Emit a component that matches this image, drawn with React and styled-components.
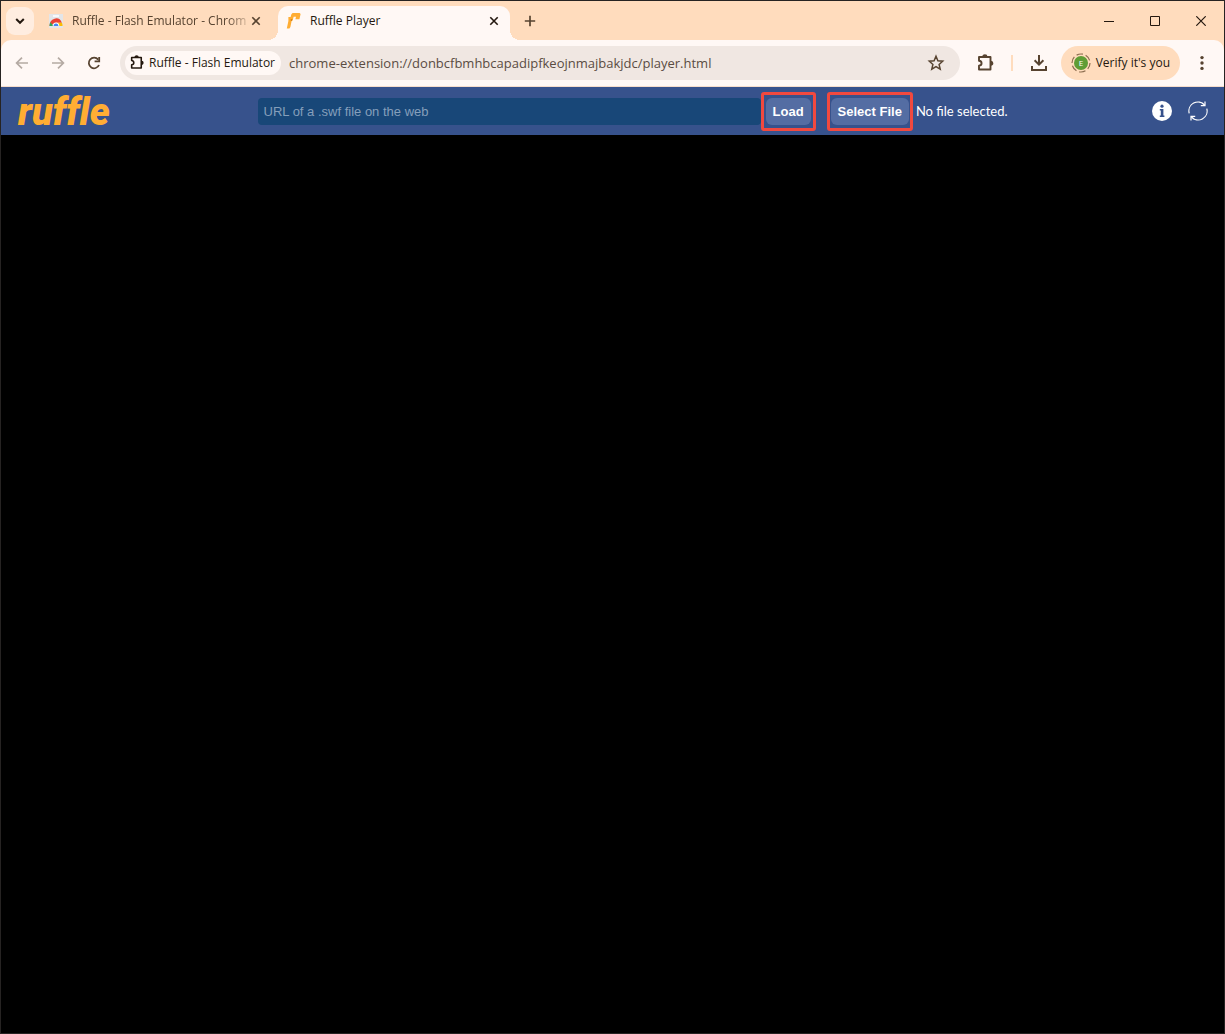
import React from "react";
import styled, { createGlobalStyle } from "styled-components";

const c = {
  frame: "#262322",
  strip: "#ffdcbd",
  bar: "#fff8f5",
  field: "#f0e7e2",
  ink: "#24180f",
  brown: "#574330",
  header: "#37528c",
  input: "#184778",
  button: "#546da3",
  orange: "#ffad33",
  red: "#f1493f",
};

const GlobalStyle = createGlobalStyle`
  * { box-sizing: border-box; }
  body { margin: 0; }
  button, input { font: inherit; }
`;

const Window = styled.div`
  display: flex;
  flex-direction: column;
  min-height: 100vh;
  border: 1px solid ${c.frame};
  background: ${c.strip};
  font-family: "Open Sans", "Noto Sans", sans-serif;
  font-size: 12px;
  color: ${c.ink};
`;

const TabStrip = styled.header`
  display: flex;
  align-items: center;
  height: 39px;
  padding-left: 5px;
`;

const PlainButton = styled.button`
  display: inline-flex;
  align-items: center;
  justify-content: center;
  flex: none;
  width: ${(p) => p.$w || 20}px;
  height: ${(p) => p.$h || 20}px;
  padding: 0;
  border: 0;
  border-radius: ${(p) => p.$radius || 0}px;
  background: ${(p) => p.$bg || "transparent"};
  color: ${(p) => p.$color || c.ink};
`;

const Tab = styled.div`
  position: relative;
  display: flex;
  align-items: center;
  align-self: stretch;
  width: 232px;
  margin-top: 5px;
  padding: 0 8px 5px 8px;
  border-radius: 10px 10px 0 0;
  background: ${(p) => (p.$active ? c.bar : "transparent")};
  color: ${(p) => (p.$active ? c.ink : c.brown)};

  &::before,
  &::after {
    content: "";
    display: ${(p) => (p.$active ? "block" : "none")};
    position: absolute;
    bottom: 0;
    width: 10px;
    height: 10px;
  }
  &::before {
    right: 100%;
    background: radial-gradient(circle at 0 0, transparent 10px, ${c.bar} 10px);
  }
  &::after {
    left: 100%;
    background: radial-gradient(circle at 100% 0, transparent 10px, ${c.bar} 10px);
  }
`;

const Tabs = styled.nav`
  display: flex;
  align-self: stretch;
  gap: 6px;
  margin: 0 10px 0 6px;
`;

const TabTitle = styled.span`
  flex: 1;
  margin-left: 8px;
  white-space: nowrap;
  line-height: 18px;
  mask-image: ${(p) => (p.$fade ? "linear-gradient(to right, #000 88%, rgba(0, 0, 0, 0.2))" : "none")};
`;

const WindowControls = styled.div`
  display: flex;
  margin-left: auto;
`;

const Toolbar = styled.div`
  display: flex;
  align-items: center;
  height: 47px;
  padding: 0 12px 1px 11px;
  border-bottom: 1px solid #f5dccb;
  border-radius: 10px 10px 0 0;
  background: ${c.bar};
`;

const NavButtons = styled.div`
  display: flex;
  gap: 16px;
  margin-right: 16px;
`;

const Omnibox = styled.div`
  display: flex;
  align-items: center;
  flex: 1;
  min-width: 0;
  height: 34px;
  padding: 0 14px 0 5px;
  border-radius: 17px;
  background: ${c.field};
`;

const Chip = styled.button`
  display: flex;
  align-items: center;
  flex: none;
  gap: 4px;
  height: 24px;
  padding: 0 6px 0 5px;
  border: 0;
  border-radius: 12px;
  background: ${c.bar};
  color: ${c.ink};
  font-weight: 500;
  white-space: nowrap;
`;

const Address = styled.input`
  flex: 1;
  min-width: 0;
  height: 24px;
  padding: 0 8px;
  border: 0;
  background: transparent;
  color: #5a4c42;
  font-size: 13px;
  outline: 0;
`;

const Actions = styled.div`
  display: flex;
  align-items: center;
  margin-left: 16px;
`;

const Divider = styled.span`
  width: 2px;
  height: 16px;
  margin: 0 16px 0 15px;
  background: ${c.strip};
`;

const Profile = styled.button`
  display: flex;
  align-items: center;
  gap: 5px;
  height: 34px;
  margin: 0 12px;
  padding: 0 10px;
  border: 0;
  border-radius: 17px;
  background: ${c.strip};
  color: ${c.ink};
  white-space: nowrap;
`;

const PlayerHeader = styled.header`
  display: flex;
  align-items: center;
  justify-content: space-between;
  height: 48px;
  padding: 0 16px;
  background: ${c.header};
  color: #fff;
`;

const Logo = styled.a`
  display: block;
  height: 36px;
  text-decoration: none;
`;

const Wordmark = styled.svg`
  display: block;
  overflow: visible;
  text {
    fill: ${c.orange};
    font: italic 900 38px Roboto, sans-serif;
    font-variant-ligatures: none;
  }
`;

const LoadForm = styled.form`
  display: flex;
  align-items: center;
  flex: 0 1 750px;
  min-width: 0;
  font-family: "Liberation Sans", Arial, sans-serif;
`;

const UrlInput = styled.input`
  flex: 1;
  min-width: 0;
  height: 27px;
  padding: 0 6px;
  border: 0;
  border-radius: 4px;
  background: ${c.input};
  color: #fff;
  font-size: 13px;
  &::placeholder {
    color: #859fbb;
    opacity: 1;
  }
`;

const Callout = styled.span`
  display: flex;
  flex: none;
  padding: 3px ${(p) => p.$inset}px;
  border: 3px solid ${c.red};
  border-radius: 3px;
`;

const ActionButton = styled.button`
  height: 27px;
  padding: 0 7px;
  border: 0;
  border-radius: 6px;
  background: ${c.button};
  color: #fff;
  font-size: 13px;
  font-weight: bold;
  white-space: nowrap;
`;

const FilePicker = styled.div`
  display: flex;
  align-items: center;
  flex: none;
  gap: 3px;
  margin-left: 11px;
`;

const FileName = styled.output`
  font-family: Lato, sans-serif;
  font-size: 13px;
  white-space: nowrap;
`;

const HeaderIcons = styled.div`
  display: flex;
  gap: 16px;
`;

const Stage = styled.main`
  flex: 1;
  background: #000;
`;

const Icon = ({ size = 20, w = 2, children }) => (
  <svg width={size} height={size} viewBox={`0 0 ${size} ${size}`} fill="none" stroke="currentColor" strokeWidth={w} aria-hidden="true">
    {children}
  </svg>
);

const CloseIcon = () => (
  <Icon size={10} w={1.6}><path d="M1.3 1.3l7.4 7.4M8.7 1.3L1.3 8.7" /></Icon>
);

const PuzzleIcon = ({ size }) => (
  <svg width={size} height={size} viewBox="0 0 18 18" fill="none" stroke="currentColor" strokeWidth="1.9" strokeLinejoin="round" aria-hidden="true">
    <path d="M2 3h11.5v12.5H2v-3.7c3.4-.4 3.4-4.7 0-5.1z" />
    <path d="M6 3a1.9 1.9 0 0 1 3.8 0zM13.5 7.3a2 2 0 0 1 0 4z" fill="currentColor" stroke="none" />
    <path d="M6.3 2.5a1.6 1.4 0 0 1 3.2 0M14 7.7a1.4 1.6 0 0 1 0 3.2" />
  </svg>
);

const StoreIcon = () => (
  <svg width="16" height="16" viewBox="0 0 16 16" aria-hidden="true">
    <path fill="#e3e5e8" d="M1 1h14v14H1z" />
    <path fill="#f8f9fa" d="M5 2h6v2H5z" />
    <path fill="#ea4335" d="M1.5 13a6.5 7.5 0 0 1 12.4-3.2H8z" />
    <path fill="#34a853" d="M1.5 13a7 7 0 0 1 1-3.8L5.6 13z" />
    <path fill="#fbbc04" d="M10 9.8h4a7 7 0 0 1 .6 3.2h-4z" />
    <path fill="#fff" d="M4.7 13a3.3 3.5 0 0 1 6.6 0z" />
    <path fill="#4285f4" d="M5.6 13a2.4 2.6 0 0 1 4.8 0z" />
  </svg>
);

const RuffleIcon = () => (
  <svg width="16" height="16" viewBox="0 0 16 16" aria-hidden="true">
    <path fill={c.orange} d="M2.4 4h2.2l.8-2.8L6.6 0h7l1 1-1.2 5.2h-4l.6-2.4H7.6l-.9 3.7h-1L4.4 14l-1 1.4H.8L2.4 8z" />
    <path fill="#d98518" d="M4.6 6h1.8L6 8H4.8z" />
  </svg>
);

export default function App() {
  return (
    <>
      <GlobalStyle />
      <Window>
        <TabStrip>
          <PlainButton $w={28} $h={28} $radius={9} $bg="#ffede0" aria-label="Search tabs">
            <Icon size={10}><path d="M1.2 3l3.8 3.8L8.8 3" /></Icon>
          </PlainButton>
          <Tabs>
            <Tab>
              <StoreIcon />
              <TabTitle $fade>Ruffle - Flash Emulator - Chrom</TabTitle>
              <PlainButton $w={16} $color={c.brown} aria-label="Close tab"><CloseIcon /></PlainButton>
            </Tab>
            <Tab $active>
              <RuffleIcon />
              <TabTitle>Ruffle Player</TabTitle>
              <PlainButton $w={16} aria-label="Close tab"><CloseIcon /></PlainButton>
            </Tab>
          </Tabs>
          <PlainButton $color={c.brown} aria-label="New tab">
            <Icon size={12} w={1.7}><path d="M6 .8v10.4M.8 6h10.4" /></Icon>
          </PlainButton>
          <WindowControls>
            <PlainButton $w={46} $h={38} aria-label="Minimize">
              <Icon size={10} w={1}><path d="M0 5.5h10" /></Icon>
            </PlainButton>
            <PlainButton $w={46} $h={38} aria-label="Maximize">
              <Icon size={10} w={1}><path d="M.5.5h9v9h-9z" /></Icon>
            </PlainButton>
            <PlainButton $w={46} $h={38} aria-label="Close">
              <Icon size={10} w={1.2}><path d="M.3.3l9.4 9.4M9.7.3L.3 9.7" /></Icon>
            </PlainButton>
          </WindowControls>
        </TabStrip>

        <Toolbar>
          <NavButtons>
            <PlainButton $color="#b5aaa3" aria-label="Back">
              <Icon w={1.7}><path d="M16 10H5M10 4.6L4.6 10l5.4 5.4" /></Icon>
            </PlainButton>
            <PlainButton $color="#b5aaa3" aria-label="Forward">
              <Icon w={1.7}><path d="M4 10h11M10 4.6l5.4 5.4-5.4 5.4" /></Icon>
            </PlainButton>
            <PlainButton $color={c.brown} aria-label="Reload">
              <Icon w={1.8}>
                <path d="M15 12A5.3 5.3 0 1 1 14.2 6.6" />
                <path d="M15.2 4v4.4h-4.6" />
              </Icon>
            </PlainButton>
          </NavButtons>
          <Omnibox>
            <Chip><PuzzleIcon size={15} />Ruffle - Flash Emulator</Chip>
            <Address
              aria-label="Address"
              spellCheck={false}
              defaultValue="chrome-extension://donbcfbmhbcapadipfkeojnmajbakjdc/player.html"
            />
            <PlainButton $color={c.brown} aria-label="Bookmark this tab">
              <Icon w={1.5}>
                <path d="M10 3.3l1.9 4.5 4.8.4-3.6 3.2 1.1 4.7L10 13.6l-4.2 2.5 1.1-4.7-3.6-3.2 4.8-.4z" />
              </Icon>
            </PlainButton>
          </Omnibox>
          <Actions>
            <PlainButton $color={c.brown} aria-label="Extensions"><PuzzleIcon size={18} /></PlainButton>
            <Divider />
            <PlainButton $color={c.brown} aria-label="Downloads">
              <Icon><path d="M10 2v9M5.6 7.2l4.4 4.4 4.4-4.4M3 13v4h14v-4" /></Icon>
            </PlainButton>
            <Profile>
              <svg width="20" height="20" viewBox="0 0 20 20" aria-hidden="true">
                <circle cx="10" cy="10" r="9" fill="none" stroke="#8c6d4f" strokeWidth="1.2" strokeDasharray="6.5 2.9" />
                <circle cx="10" cy="10" r="7" fill="#5f9d35" />
                <text x="10" y="13" textAnchor="middle" fontSize="8" fill="#fff">E</text>
              </svg>
              Verify it's you
            </Profile>
            <PlainButton $color={c.brown} aria-label="Menu">
              <Icon>
                <g fill="currentColor" stroke="none">
                  <circle cx="10" cy="4.6" r="1.7" /><circle cx="10" cy="10" r="1.7" /><circle cx="10" cy="15.4" r="1.7" />
                </g>
              </Icon>
            </PlainButton>
          </Actions>
        </Toolbar>

        <PlayerHeader>
          <Logo href="#" aria-label="Ruffle">
            <Wordmark width="96" height="36" viewBox="0 0 96 36">
              <text x="1" y="32">ruffle</text>
            </Wordmark>
          </Logo>
          <LoadForm onSubmit={(e) => e.preventDefault()}>
            <UrlInput type="text" aria-label="URL of a .swf file on the web" placeholder="URL of a .swf file on the web" />
            <Callout $inset={2}><ActionButton type="submit">Load</ActionButton></Callout>
            <FilePicker>
              <Callout $inset={1}><ActionButton type="button">Select File</ActionButton></Callout>
              <FileName>No file selected.</FileName>
            </FilePicker>
          </LoadForm>
          <HeaderIcons>
            <PlainButton $color="#fff" aria-label="Information">
              <svg width="20" height="20" viewBox="0 0 20 20" aria-hidden="true">
                <circle cx="10" cy="10" r="10" fill="#fff" />
                <circle cx="10" cy="5.2" r="1.6" fill={c.header} />
                <path d="M7.8 8h3.6v6.6h1v1.4H7.8v-1.4h1V9.4h-1z" fill={c.header} />
              </svg>
            </PlainButton>
            <PlainButton $color="#fff" aria-label="Reload movie">
              <Icon w={1.2}>
                <path d="M1.2 12.3A9 9 0 0 1 16.6 4M18.8 7.7A9 9 0 0 1 3.4 16" />
                <path d="M17 .6v4h-4.2M3 19.4v-4h4.2" />
              </Icon>
            </PlainButton>
          </HeaderIcons>
        </PlayerHeader>
        <Stage />
      </Window>
    </>
  );
}
